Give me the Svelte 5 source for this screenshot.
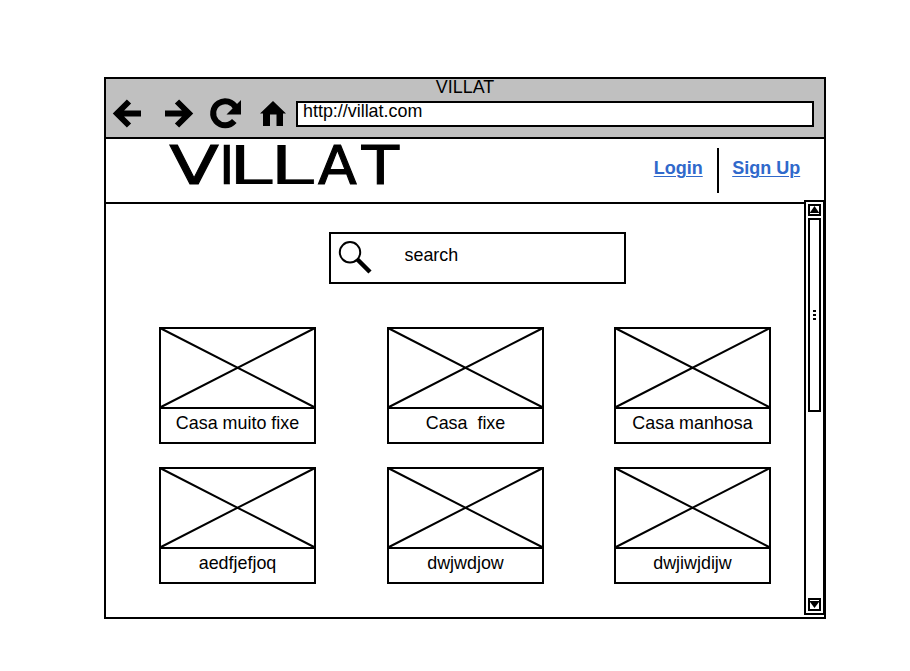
<script>
  const rows = [
    ['Casa muito fixe', 'Casa \u00a0fixe', 'Casa manhosa'],
    ['aedfjefjoq', 'dwjwdjow', 'dwjiwjdijw'],
  ];
  const logo = [
    { ch: 'V', x: 169.3, sx: 1.37, w: 0.9 },
    { ch: 'I', x: 218.2, sx: 1.1, w: 0.4 },
    { ch: 'L', x: 228.2, sx: 1.51, w: 0.2 },
    { ch: 'L', x: 269.7, sx: 1.51, w: 0.2 },
    { ch: 'A', x: 318, sx: 1.07, w: 1.1 },
    { ch: 'T', x: 361.8, sx: 1.15, w: 1 },
  ];
</script>

<div class="page">
  <main class="window">
    <header class="chrome">
      <div class="title">VILLAT</div>
      <div class="toolbar">
        <svg class="nav" width="184" height="34" viewBox="106 97 184 34" aria-hidden="true">
          <g fill="none" stroke="#000" stroke-width="6">
            <path d="M141 113.5H117M129 101.500L117 113.500L129 125.500" />
            <path d="M165 113.500H189M177 101.500L189 113.500L177 125.500" />
            <path d="M236 108A12 12 0 1 0 234.300 121" />
          </g>
          <path d="M241 100V114.500H226.500Z" />
          <path d="M273 101L286 113.500H283V126H276.500V114.500H270V126H263V113.500H260Z" />
        </svg>
        <div class="url">http://villat.com</div>
      </div>
    </header>

    <section class="masthead">
      <svg class="logo" width="240" height="46" viewBox="165 141 240 46" role="img" aria-label="VILLAT">
        {#each logo as l}<text transform="translate({l.x} 184) scale({l.sx} 1)" stroke="#000" stroke-width={l.w}>{l.ch}</text>{/each}
      </svg>
      <nav>
        <a href="#login">Login</a>
        <i></i>
        <a href="#signup">Sign Up</a>
      </nav>
    </section>

    <section class="body">
      <div class="content">
        <div class="search">
          <svg width="36" height="36" viewBox="337 239 36 36" aria-hidden="true">
            <circle cx="350" cy="252.300" r="10.200" fill="none" stroke="#000" stroke-width="2" />
            <path d="M357.500 259.500L370 272" stroke="#000" stroke-width="4.500" />
          </svg>
          <span>search</span>
        </div>
        {#each rows as row}
          <div class="row">
            {#each row as name}
              <article class="card">
                <svg width="157" height="82" viewBox="0 0 157 82" aria-hidden="true">
                  <path d="M1 1H156V81H1ZL156 80.500M156 1L1 80.500" fill="none" stroke="#000" stroke-width="2" />
                </svg>
                <div class="name">{name}</div>
              </article>
            {/each}
          </div>
        {/each}
      </div>
      <div class="scrollbar">
        <div class="btn"><svg width="9" height="8" viewBox="0 0 9 8"><path d="M4.500 0L9 6.500V7H0V6.500Z" /></svg></div>
        <div class="thumb"><b></b><b></b><b></b></div>
        <div class="btn down"><svg width="9" height="9" viewBox="0 0 9 9"><path d="M0 1H9V2L4.500 8L0 2Z" /></svg></div>
      </div>
    </section>
  </main>
</div>

<style>
  :global(body) { background: #fff; }
  .page, .page * { box-sizing: border-box; }
  .page {
    width: 910px;
    height: 671px;
    padding: 77px 0 0 104px;
    font: 17.9px/20px "Liberation Sans", Arial, sans-serif;
    color: #000;
    overflow: hidden;
  }
  svg { display: block; flex: none; overflow: visible; }
  .window { width: 722px; height: 542px; border: 2px solid #000; }
  .chrome { height: 60px; background: #c0c0c0; border-bottom: 2px solid #000; }
  .title { height: 18px; line-height: 17px; text-align: center; font-size: 17.9px; }
  .toolbar { display: flex; }
  .url {
    width: 518px;
    height: 26px;
    margin: 4px 0 0 6px;
    padding-left: 5px;
    border: 2px solid #000;
    background: #fff;
    line-height: 17px;
  }
  .masthead {
    display: flex;
    justify-content: space-between;
    height: 65px;
    padding: 2px 23.8px 0 59px;
    border-bottom: 2px solid #000;
  }
  .logo text { font: 53px "DejaVu Sans", sans-serif; }
  nav { display: flex; padding-top: 7px; }
  nav a {
    padding-top: 10px;
    color: #3069cb;
    font-weight: 700;
    font-size: 18px;
    text-decoration: underline;
    text-decoration-thickness: 1px;
    text-underline-offset: 2px;
    white-space: nowrap;
  }
  nav i { width: 2px; height: 45px; margin: 0 13.500px 0 14px; background: #000; }
  .body { display: flex; height: 413px; }
  .content { flex: none; width: 698px; padding: 28px 0 0 53px; }
  .search {
    display: flex;
    width: 297px;
    height: 52px;
    margin: 0 0 43px 170px;
    padding: 5px 0 0 6px;
    border: 2px solid #000;
  }
  .search span { margin: 6px 0 0 31.5px; }
  .row { display: flex; gap: 71px; margin-bottom: 23px; }
  .card { width: 157px; height: 117px; }
  .card:last-child { margin-left: -1px; }
  .name {
    height: 35px;
    padding-top: 4px;
    border: solid #000;
    border-width: 0 2px 2px;
    text-align: center;
    white-space: nowrap;
  }
  .scrollbar {
    display: flex;
    flex-direction: column;
    flex: none;
    width: 21px;
    height: 415px;
    margin-top: -4px;
    padding: 2px;
    border: 2px solid #000;
    background: #fff;
  }
  .btn { width: 13px; height: 12px; border: 2px solid #000; }
  .down { height: 13px; margin-top: auto; }
  .thumb {
    display: flex;
    flex-direction: column;
    align-items: center;
    gap: 2px;
    width: 13px;
    height: 194px;
    margin-top: 2px;
    padding-top: 90px;
    border: 2px solid #000;
  }
  .thumb b { width: 3px; height: 2px; background: #000; }
</style>
